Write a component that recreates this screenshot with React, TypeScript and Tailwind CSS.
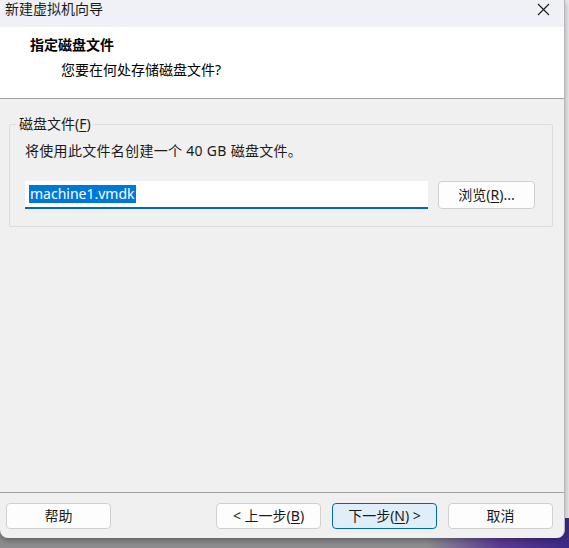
import React from "react";

const font = "font-['Noto_Sans','Noto_Sans_CJK_SC',sans-serif]";

function WizButton({
  children,
  primary = false,
  className = "",
}: {
  children: React.ReactNode;
  primary?: boolean;
  className?: string;
}) {
  return (
    <button
      type="button"
      className={
        "h-[26px] w-[105px] rounded-[4px] border text-[14px] leading-none text-[#1a1a1a] flex items-center justify-center " +
        (primary
          ? "border-[#0067c0] bg-[#e0eef9] "
          : "border-[#d0d0d0] bg-[#fdfdfd] ") +
        className
      }
    >
      {children}
    </button>
  );
}

export default function App() {
  return (
    <div className={`relative w-[569px] h-[548px] overflow-hidden bg-[#ececec] ${font}`}>
      {/* desktop strip behind the dialog */}
      <div className="absolute left-0 right-0 bottom-0 h-[30px] bg-[linear-gradient(90deg,#8d8d90_0%,#8d8d90_75%,#5a3a94_88%,#3d2a86_100%)]" />

      <div className="relative flex flex-col w-[565px] h-[538px] bg-[#f0f0f0] border-r border-[#b9b9b9] rounded-b-[8px] shadow-[0_2px_6px_rgba(0,0,0,0.35)] overflow-hidden">
        {/* title bar */}
        <div className="flex items-start justify-between h-[27px] bg-[#eff1f6] pl-[5px] pr-[14px]">
          <span className="text-[14px] leading-[18px] text-[#1a1a1a]">新建虚拟机向导</span>
          <svg width="13" height="13" viewBox="0 0 13 13" className="mt-[3px]">
            <path d="M1 1L12 12M12 1L1 12" stroke="#1a1a1a" strokeWidth="1.1" fill="none" />
          </svg>
        </div>

        {/* header */}
        <div className="h-[72px] bg-white border-b border-[#a0a0a0] pl-[30px] pt-[8px]">
          <div className="text-[14px] leading-[20px] font-bold text-black">指定磁盘文件</div>
          <div className="text-[14px] leading-[20px] text-black pl-[31px] mt-[5px]">
            您要在何处存储磁盘文件?
          </div>
        </div>

        {/* body */}
        <div className="flex-1 pt-[15px] px-[9px]">
          <fieldset className="border border-[#dcdcdc] rounded-[2px] pl-[15px] pr-[16px] pb-[17px] w-[544px]">
            <legend className="-ml-[8px] px-[2px] text-[14px] leading-[20px] text-[#1a1a1a]">
              磁盘文件(<span className="underline underline-offset-2">F</span>)
            </legend>
            <div className="mt-[7px] text-[14px] leading-[20px] text-[#1a1a1a] tracking-[0.3px]">
              将使用此文件名创建一个 40 GB 磁盘文件。
            </div>
            <div className="mt-[20px] flex items-center gap-[10px]">
              <div className="w-[403px] h-[28px] bg-white border-b-2 border-[#0067c0] flex items-center pl-[4px]">
                <span className="bg-[#0078d7] text-white text-[14px] leading-[18px] px-[1px]">
                  machine1.vmdk
                </span>
              </div>
              <button
                type="button"
                className="w-[97px] h-[28px] rounded-[4px] border border-[#d0d0d0] bg-[#fdfdfd] text-[14px] leading-none text-[#1a1a1a] flex items-center justify-center"
              >
                浏览(<span className="underline underline-offset-2">R</span>)...
              </button>
            </div>
          </fieldset>
        </div>

        {/* footer */}
        <div className="h-[46px] border-t border-[#a0a0a0] flex items-start pt-[10px] pl-[6px] pr-[11px]">
          <WizButton>帮助</WizButton>
          <div className="flex-1" />
          <div className="flex gap-[11px]">
            <WizButton>
              &lt; 上一步(<span className="underline underline-offset-2">B</span>)
            </WizButton>
            <WizButton primary>
              下一步(<span className="underline underline-offset-2">N</span>) &gt;
            </WizButton>
            <WizButton>取消</WizButton>
          </div>
        </div>
      </div>
    </div>
  );
}
